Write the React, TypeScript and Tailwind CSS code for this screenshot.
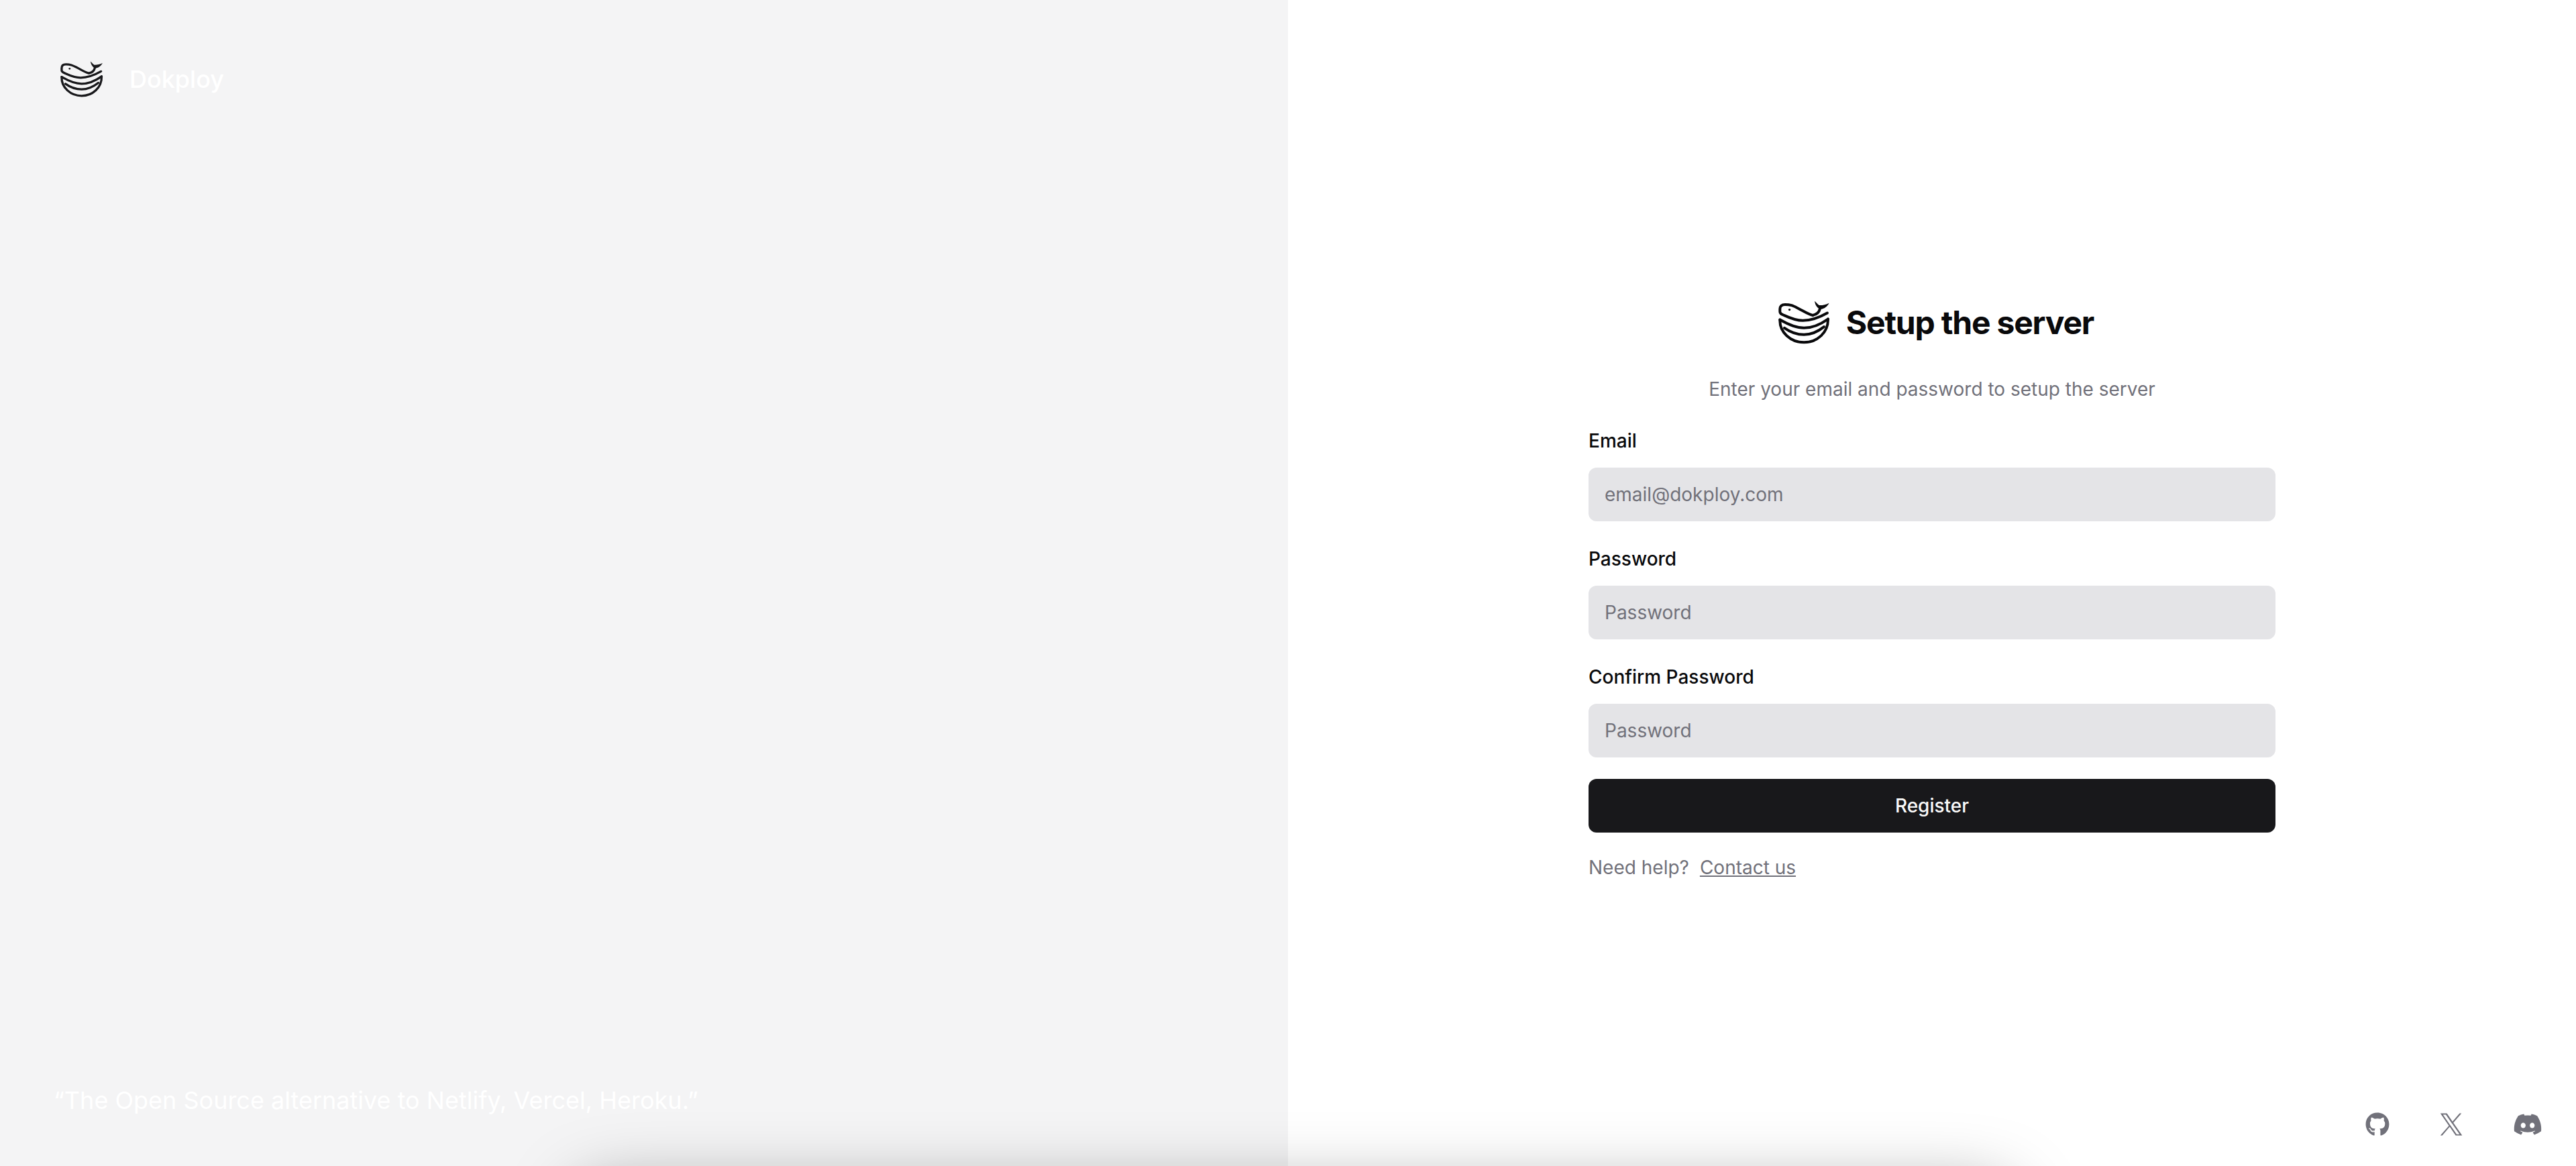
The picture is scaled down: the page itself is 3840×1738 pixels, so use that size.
import { FaGithub, FaDiscord } from "react-icons/fa";

function Logo({ className }: { className: string }) {
  return (
    <svg viewBox="0 32 266 196" className={className} fill="none" stroke="currentColor" strokeWidth="12" strokeLinecap="round" strokeLinejoin="round">
      {/* whale body */}
      <path d="M190 98C170 95 150 80 120 65C100 55 90 50 65 50C50 50 42 58 42 70V82C42 92 50 94 60 98C90 112 115 122 145 122C185 122 225 105 255 88" />
      <path d="M190 98C205 95 218 85 222 68" />
      <circle cx="85" cy="73" r="5" fill="currentColor" stroke="none" />
      {/* tail */}
      <path d="M198 34C206 42 212 48 218 53C232 54 248 50 263 43C256 57 243 68 226 71C212 70 200 52 198 34Z" fill="currentColor" stroke="none" />
      {/* bowl */}
      <path d="M42 118C80 140 120 155 150 155C190 155 230 135 258 115" />
      <path d="M62 155C90 175 120 185 150 185C185 185 215 170 240 150" />
      <path d="M42 118C40 175 90 220 150 220C210 220 260 175 258 115" />
    </svg>
  );
}

function Field({ label, placeholder }: { label: string; placeholder: string }) {
  return (
    <div className="flex flex-col gap-[16px]">
      <label className="text-[28px] leading-[48px] font-medium text-[#09090b]">{label}</label>
      <input
        placeholder={placeholder}
        className="h-[80px] w-full rounded-[12px] bg-[#e4e4e7] px-[24px] text-[28px] text-[#09090b] placeholder:text-[#71717a]"
      />
    </div>
  );
}

export default function App() {
  return (
    <div className="relative flex h-[1738px] w-[3840px] overflow-hidden bg-white font-['Inter',sans-serif] antialiased">
      {/* left panel */}
      <div className="flex w-[1920px] flex-col justify-between bg-[#f4f4f5] px-[80px] pt-[80px] pb-[70px]">
        <div className="flex items-center gap-[39px] pt-[10px] text-[#18181b]">
          <Logo className="h-[54px] w-[74px]" />
          <span className="text-[36px] leading-[56px] font-medium text-white">Dokploy</span>
        </div>
        <p className="text-[36px] leading-[56px] text-white">&ldquo;The Open Source alternative to Netlify, Vercel, Heroku.&rdquo;</p>
      </div>

      {/* right panel */}
      <div className="relative flex w-[1920px] flex-col items-center pt-[448px]">
        <div className="flex w-[1024px] flex-col">
          <div className="flex items-center justify-center gap-[24px] text-[#09090b]">
            <Logo className="h-[65px] w-[89px]" />
            <h1 className="text-[48px] leading-[64px] font-bold tracking-[-1.2px] text-[#09090b]">Setup the server</h1>
          </div>
          <p className="mt-[47px] text-center text-[28px] leading-[40px] text-[#71717a]">Enter your email and password to setup the server</p>
          <div className="mt-[33px] flex flex-col gap-[32px]">
            <Field label="Email" placeholder="email@dokploy.com" />
            <Field label="Password" placeholder="Password" />
            <Field label="Confirm Password" placeholder="Password" />
          </div>
          <button className="mt-[32px] h-[80px] w-full rounded-[12px] bg-[#18181b] text-[28px] font-medium text-[#fafafa]">Register</button>
          <div className="mt-[32px] flex gap-[16px] text-[28px] leading-[40px] text-[#71717a]">
            <span>Need help?</span>
            <a className="underline">Contact us</a>
          </div>
        </div>
        <div className="absolute right-[50px] bottom-[40px] flex items-center gap-[74px] text-[#71717a]">
          <FaGithub className="h-[36px] w-[36px]" />
          <svg viewBox="0 0 24 24" className="h-[36px] w-[36px]" fill="currentColor">
            <path d="M14.1 10.3 22.2 1h-1.9l-7 8.1L7.700 1H1.200l8.500 12.300L1.200 23h1.900l7.400-8.600 5.900 8.600h6.500zm-2.600 3-.9-1.200L3.800 2.400h2.900l5.500 7.900.9 1.200 7.200 10.300h-2.900z" />
          </svg>
          <FaDiscord className="h-[44px] w-[44px]" />
        </div>
      </div>

      {/* shadow from the card below the fold */}
      <div className="absolute top-[1778px] left-[865px] h-[200px] w-[2127px] rounded-[40px] shadow-[0_0_100px_10px_rgba(0,0,0,0.35)]" />
    </div>
  );
}
